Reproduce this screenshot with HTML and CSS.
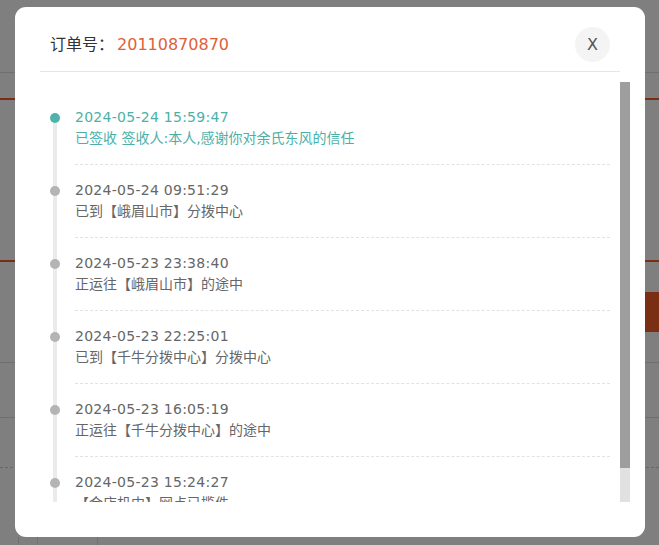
FILE: index.html
```html
<!DOCTYPE html>
<html lang="zh-CN">
<head>
<meta charset="utf-8">
<title>物流详情</title>
<link rel="stylesheet" href="styles.css">
</head>
<body>
<div class="page">
  <div class="page-top"></div>
  <div class="page-tabs"></div>
  <div class="page-panel"></div>
  <div class="page-btn-row"><span class="page-btn"></span></div>
  <div class="page-row"></div>
  <div class="page-row page-row-tall"></div>
  <div class="page-row page-row-dash"></div>
  <div class="page-table">
    <span class="cell c1"></span><span class="cell c2"></span><span class="cell c3"></span><span class="cell c4"></span>
  </div>
</div>

<div class="mask"></div>

<div class="modal">
  <div class="modal-head">
    <div class="title">订单号：<span class="order-no">20110870870</span></div>
    <button class="close" type="button">X</button>
  </div>
  <div class="modal-body">
    <div class="scroll-view">
      <ul class="timeline">
        <li class="step active">
          <div class="time">2024-05-24 15:59:47</div>
          <div class="desc">已签收 签收人:本人,感谢你对余氏东风的信任</div>
        </li>
        <li class="step">
          <div class="time">2024-05-24 09:51:29</div>
          <div class="desc">已到【峨眉山市】分拨中心</div>
        </li>
        <li class="step">
          <div class="time">2024-05-23 23:38:40</div>
          <div class="desc">正运往【峨眉山市】的途中</div>
        </li>
        <li class="step">
          <div class="time">2024-05-23 22:25:01</div>
          <div class="desc">已到【千牛分拨中心】分拨中心</div>
        </li>
        <li class="step">
          <div class="time">2024-05-23 16:05:19</div>
          <div class="desc">正运往【千牛分拨中心】的途中</div>
        </li>
        <li class="step last">
          <div class="time">2024-05-23 15:24:27</div>
          <div class="desc">【金店机中】网点已揽件</div>
        </li>
      </ul>
    </div>
    <div class="scrollbar">
      <div class="scroll-thumb"></div>
      <div class="scroll-track"></div>
    </div>
  </div>
</div>
</body>
</html>
```

FILE: styles.css
```css
* { box-sizing: border-box; }

html, body {
  margin: 0;
  padding: 0;
  height: 100%;
  overflow: hidden;
}

body {
  background: #ffffff;
  font-family: "DejaVu Sans", "Noto Sans CJK SC", sans-serif;
  color: #666;
}

/* ---------- underlying page (mostly hidden) ---------- */
.page {
  width: 100%;
}
.page-top {
  height: 73px;
  border-bottom: 1px solid #dedede;
}
.page-tabs {
  height: 27px;
  border-bottom: 2px solid #f45c28;
}
.page-panel {
  height: 162px;
  border-bottom: 2px solid #f45c28;
}
.page-btn-row {
  display: flex;
  justify-content: flex-end;
  padding-top: 30px;
}
.page-btn {
  display: block;
  width: 40px;
  height: 40px;
  background: #f45c28;
}
.page-row {
  height: 31px;
  border-bottom: 1px solid #dcdcdc;
}
.page-row-tall {
  height: 55px;
}
.page-row-dash {
  height: 50px;
  border-bottom: 1px dashed #d0d0d0;
}
.page-table {
  display: flex;
  height: 8px;
  margin-top: 69px;
}
.cell {
  display: block;
  height: 100%;
  border-left: 1px solid #e2e2e2;
}
.c1 { width: 18px; border-left: none; }
.c2 { width: 19px; }
.c3 { width: 60px; }
.c4 { flex: 1; }

/* ---------- overlay ---------- */
.mask {
  position: fixed;
  inset: 0;
  background: rgba(0, 0, 0, 0.5);
}

/* ---------- modal ---------- */
.modal {
  position: fixed;
  left: 15px;
  top: 7px;
  width: 630px;
  height: 530px;
  background: #fff;
  border-radius: 11px;
  display: flex;
  flex-direction: column;
}

.modal-head {
  margin: 0 25px;
  padding: 20px 10px 9px;
  border-bottom: 1px solid #e6e6e6;
  display: flex;
  align-items: center;
  justify-content: space-between;
}

.title {
  font-size: 16px;
  line-height: 24px;
  color: #333;
}
.order-no {
  color: #e0603a;
  margin-left: 3px;
}

.close {
  width: 35px;
  height: 35px;
  border: none;
  border-radius: 50%;
  background: #f4f4f4;
  color: #555;
  font-family: "DejaVu Sans", sans-serif;
  font-size: 16px;
  line-height: 35px;
  padding: 0;
  text-align: center;
}

.modal-body {
  margin: 10px 15px 0 25px;
  height: 420px;
  display: flex;
}

.scroll-view {
  flex: 1;
  overflow: hidden;
}

.scrollbar {
  width: 10px;
  display: flex;
  flex-direction: column;
}
.scroll-thumb {
  height: 386px;
  background: #9e9e9e;
}
.scroll-track {
  flex: 1;
  background: #e1e1e1;
}

.timeline {
  list-style: none;
  margin: 0;
  padding: 10px 10px 9px 35px;
}

.step {
  position: relative;
  padding: 15px 0;
  border-bottom: 1px dashed #e2e2e2;
  font-size: 14px;
  line-height: 21px;
  color: #666;
}

.step::before {
  content: "";
  position: absolute;
  left: -22px;
  top: 0;
  bottom: -1px;
  width: 4px;
  background: #ebebeb;
}
.step.active::before {
  top: 25px;
}

.step::after {
  content: "";
  position: absolute;
  left: -25px;
  top: 21px;
  width: 10px;
  height: 10px;
  border-radius: 50%;
  background: #b4b4b4;
}
.step.active::after {
  background: #4db3ab;
}
.step.active {
  color: #4db0a8;
}

.time {
  letter-spacing: 0.27px;
}
.time,
.desc {
  white-space: nowrap;
}
```
